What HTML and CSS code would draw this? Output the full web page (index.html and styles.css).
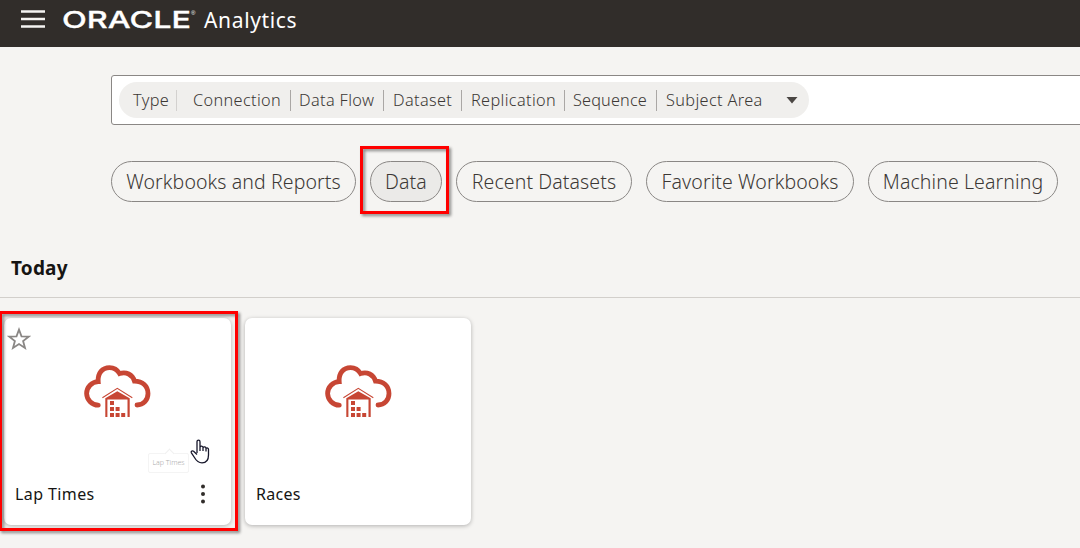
FILE: index.html
```
<!DOCTYPE html>
<html lang="en">
<head>
<meta charset="utf-8">
<title>Oracle Analytics</title>
<link rel="stylesheet" href="styles.css">
</head>
<body>
<svg width="0" height="0" class="defs">
  <symbol id="cloud-house" viewBox="0 0 68 53">
    <path d="M14.3 40.2A12 12 0 0 1 2.6 28.5A12 12 0 0 1 14.2 16.6C13.5 8 18.5 2.6 25.5 2.6C30 2.6 33.5 5 35.6 8.6C42 6.2 48.5 9.5 50.5 16.2C58.5 16.2 64 21 64 28.5C64 35 59.5 40 53 40" fill="none" stroke="#c74634" stroke-width="4.8" stroke-linecap="round"/>
    <path d="M18.4 32.7L33.3 23.4L48.3 32.7" fill="none" stroke="#c74634" stroke-width="1.1"/>
    <path d="M33.3 26.2L45.7 33.2V52H43.5V34.6H23.4V52H21.3V33.2Z" fill="#c74634"/>
    <path d="M26 36h4v4h-4zM26 42h4v4h-4zM26 48h4v4h-4zM31.6 42h4v4h-4zM31.6 48h4v4h-4zM37.2 48h4v4h-4z" fill="#c74634"/>
  </symbol>
</svg>
<header class="topbar">
  <svg class="menu" viewBox="0 0 24 18"><path d="M0 1.5h24M0 9h24M0 16.5h24"/></svg>
  <svg class="logo" viewBox="0 0 134 24"><text class="brand" x="0" y="20.4" textLength="129" lengthAdjust="spacingAndGlyphs">ORACLE</text><text class="reg" x="129" y="7">®</text></svg>
  <span class="product">Analytics</span>
</header>
<main>
  <div class="search">
    <div class="filter">
      <span class="token type">Type</span>
      <span class="token connection">Connection</span>
      <span class="token flow">Data Flow</span>
      <span class="token dataset">Dataset</span>
      <span class="token replication">Replication</span>
      <span class="token sequence">Sequence</span>
      <span class="token subject">Subject Area</span>
      <svg class="arrow" viewBox="0 0 12 8"><path d="M.5 1h11L6 7.5z"/></svg>
    </div>
  </div>
  <nav class="chips">
    <span class="chip workbooks">Workbooks and Reports</span>
    <span class="chip data">Data<i class="mark"></i></span>
    <span class="chip recent">Recent Datasets</span>
    <span class="chip favorite">Favorite Workbooks</span>
    <span class="chip machine">Machine Learning</span>
  </nav>
  <h2 class="heading"><span>Today</span></h2>
  <section class="cards">
    <article class="card">
      <svg class="star" viewBox="0 0 24 24"><path d="M12 2.6l2.5 6.7 7.2.3-5.6 4.5 1.9 6.9-6-3.9-6 3.9 1.9-6.9-5.6-4.5 7.2-.3z"/></svg>
      <svg class="picture"><use href="#cloud-house"/></svg>
      <div class="caption"><span class="lap">Lap Times</span><svg class="dots" viewBox="0 0 6 20"><circle cx="3" cy="2.6" r="2"/><circle cx="3" cy="10" r="2"/><circle cx="3" cy="17.4" r="2"/></svg></div>
      <div class="tip">Lap Times</div>
      <svg class="hand" viewBox="0 0 20 25"><path d="M7 14V2.7C7 .5 10 .5 10 2.7V8.2C10.5 6.5 13 6.7 13 8.6C14 7.3 16 7.8 16 9.4C17 8.5 18.5 9 18.5 10.5V16C18.5 21 16 23.8 12 23.8C8.5 23.8 6.7 22.5 4.8 19L1.4 13.8C.5 12.1 2.6 11.5 3.6 12.3L7 15.5M10 8V12M13 9V12M16 10V12.5"/></svg>
      <i class="mark"></i>
    </article>
    <article class="card second">
      <svg class="picture"><use href="#cloud-house"/></svg>
      <div class="caption"><span class="races">Races</span></div>
    </article>
  </section>
</main>
</body>
</html>
```
FILE: styles.css
```
* { box-sizing: border-box; }
body { margin: 0; height: 548px; overflow: hidden; background: #f5f4f2; font-family: "Noto Sans", "Open Sans", sans-serif; color: #161513; }
.defs { position: absolute; }
.topbar { height: 47px; background: #312d2a; display: flex; align-items: flex-start; padding: 0 21px; color: #fff; }
.menu { width: 24px; height: 18px; margin-top: 10px; }
.menu path { stroke: #f5f4f2; stroke-width: 2.7; }
.logo { width: 134px; height: 24px; margin: 8px 0 0 17px; overflow: visible; }
.brand { font: 500 23.5px Inter, sans-serif; fill: #fff; stroke: #fff; stroke-width: .3; }
.reg { font: 6px "Liberation Sans", sans-serif; fill: #fff; }
.product { margin: 4px 0 0 8px; font-size: 21px; letter-spacing: .65px; line-height: 32px; white-space: nowrap; }
.search { margin: 28px 0 0 111px; width: 990px; height: 50px; background: #fff; border: 1px solid #8a8785; border-radius: 3px; padding: 6px 7px; }
.filter { width: 690px; height: 36px; border-radius: 18px; background: #f0efed; display: flex; align-items: center; }
.token { height: 21px; line-height: 21px; padding-left: 8px; font-size: 16.3px; font-weight: 300; letter-spacing: .35px; color: #3c3835; border-right: 1px solid #aaa7a5; white-space: nowrap; }
.type { width: 58px; padding-left: 14px; border-color: #d3d1cf; }
.connection { width: 114px; padding-left: 16px; }
.flow { width: 93px; }
.dataset { width: 78px; padding-left: 9px; }
.replication { width: 103px; padding-left: 9px; }
.sequence { width: 92px; letter-spacing: .15px; }
.subject { width: 129px; border: 0; padding-left: 9px; }
.arrow { width: 12px; height: 8px; fill: #4a4643; }
.chips { display: flex; gap: 14px; margin: 36px 0 0 111px; }
.chip { position: relative; flex: none; height: 41px; line-height: 39px; border: 1px solid #8a8785; border-radius: 21px; text-align: center; font-size: 19.5px; font-weight: 300; letter-spacing: .1px; color: #3c3835; white-space: nowrap; }
.workbooks { width: 245px; }
.data { width: 72px; background: #ebeae8; }
.recent { width: 176px; }
.favorite { width: 208px; }
.machine { width: 190px; }
.mark { position: absolute; border: 3px solid #f00; filter: drop-shadow(2px 2px 1.5px rgba(0,0,0,.45)); }
.data .mark { left: -11px; top: -16px; width: 89px; height: 68px; }
.heading { height: 96px; margin: 0; padding: 52px 11px 0; border-bottom: 1px solid #d2cfcb; font-size: 19px; letter-spacing: .2px; line-height: 28px; font-weight: 750; }
.cards { display: flex; gap: 14px; padding: 20px 4px; }
.card { position: relative; width: 227px; height: 207px; background: #fff; border-radius: 7px; box-shadow: 0 1px 4px rgba(0,0,0,.28); display: flex; flex-direction: column; }
.second { width: 226px; }
.picture { width: 68px; height: 53px; margin: 47px 0 0 80px; }
.caption { display: flex; justify-content: space-between; padding: 64px 25px 0 11px; font-size: 16px; line-height: 24px; letter-spacing: .4px; }
.races { letter-spacing: .3px; }
.star { position: absolute; left: 3px; top: 9px; width: 24px; height: 24px; fill: none; stroke: #8a8785; stroke-width: 1.8; }
.dots { width: 6px; height: 20px; margin-top: 2px; fill: #312d2a; }
.tip { position: absolute; left: 144px; top: 135px; width: 41px; height: 20px; border: 1px solid #f4f4f4; border-radius: 2px; font-size: 7px; line-height: 18px; text-align: center; color: #aaa; font-weight: 300; letter-spacing: 0; }
.tip::before { content: ""; position: absolute; left: 17px; top: -4px; width: 6px; height: 6px; border: solid #f0f0f0; border-width: 1px 0 0 1px; background: #fff; transform: rotate(45deg); }
.hand { position: absolute; left: 186px; top: 121px; width: 20px; height: 25px; fill: #fff; stroke: #17172b; stroke-width: 1.3; }
.card .mark { left: -5px; top: -7px; width: 239px; height: 220px; }
```
